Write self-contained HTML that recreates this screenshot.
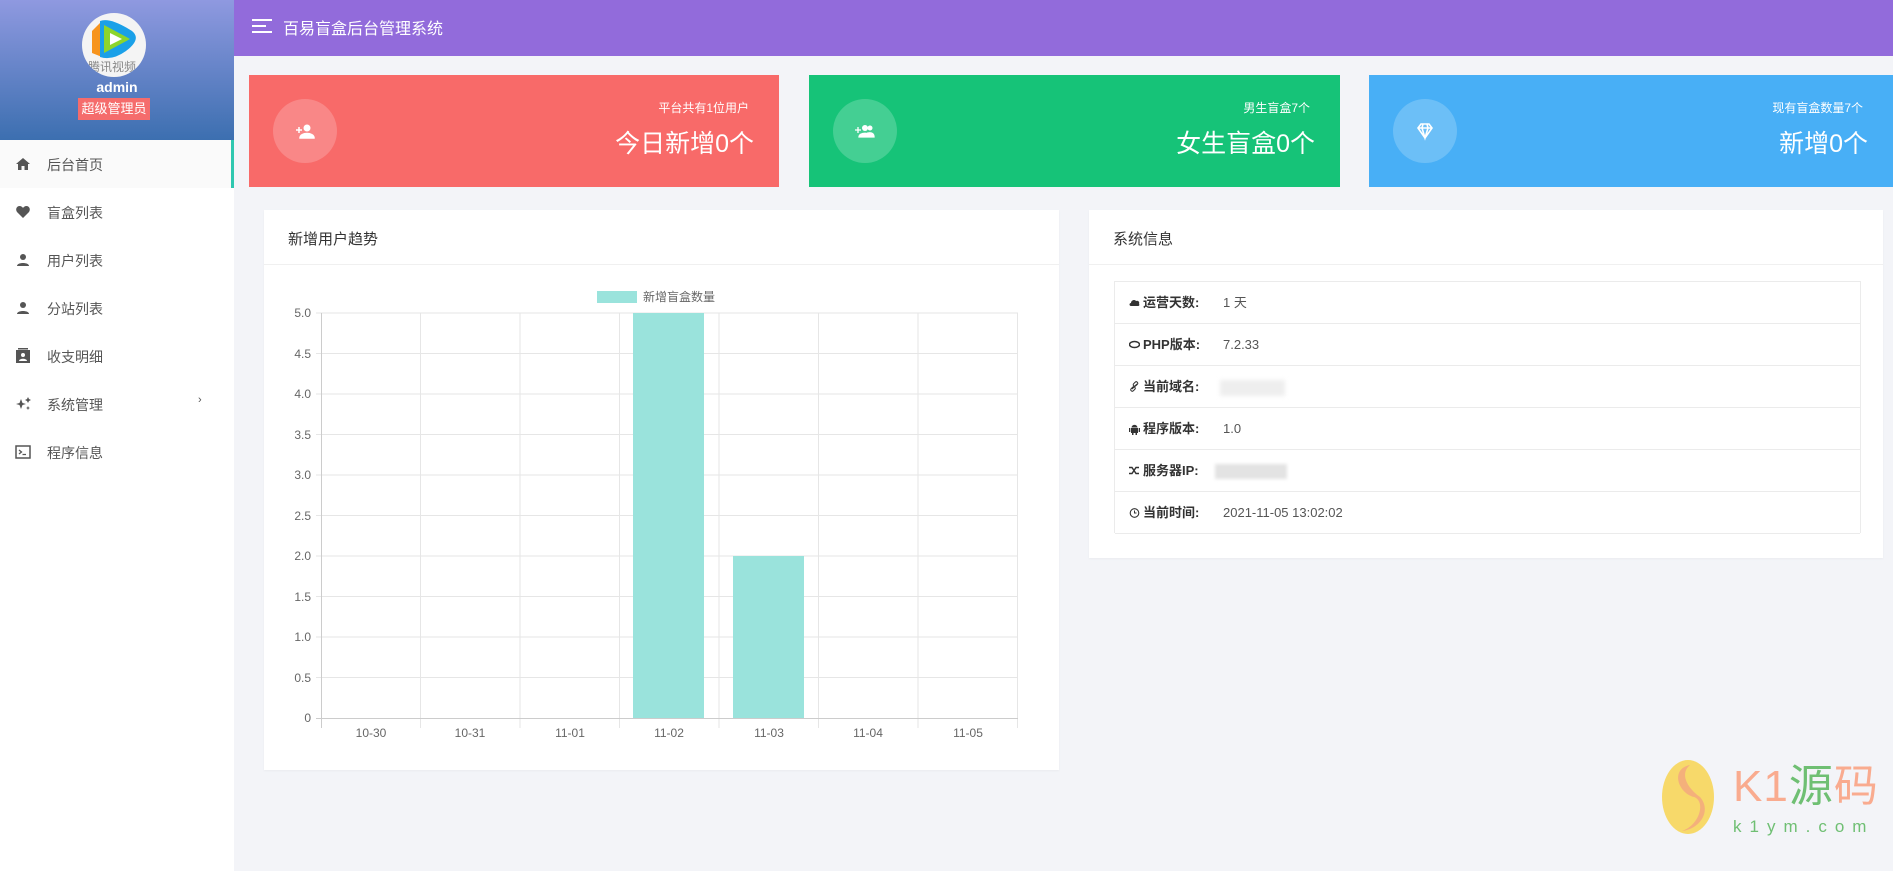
<!DOCTYPE html>
<html><head><meta charset="utf-8"><style>
*{margin:0;padding:0;box-sizing:border-box}
body{width:1893px;height:871px;overflow:hidden;background:#f3f4f8;font-family:"Liberation Sans","Noto Sans CJK SC",sans-serif;position:relative}
.abs{position:absolute}
#side{left:0;top:0;width:234px;height:871px;background:#fff}
#sh{left:0;top:0;width:234px;height:140px;background:linear-gradient(#8f99e0,#3c6fb0)}
.mi{position:absolute;left:0;width:234px;height:48px;font-size:14px;color:#555}
.mi span{position:absolute;left:47px;top:15px}
.mi svg{position:absolute;left:15px;top:16px}
#top{left:234px;top:0;width:1659px;height:56px;background:#926bdb}
.card{position:absolute;top:75px;height:112px;color:#fff}
.circ{position:absolute;left:24px;top:24px;width:64px;height:64px;border-radius:50%;background:rgba(255,255,255,.2)}
.circ svg{position:absolute;left:22px;top:22px}
.small{position:absolute;right:30px;top:24px;font-size:12px}
.big{position:absolute;right:25px;top:49px;font-size:25px}
.panel{position:absolute;top:210px;background:#fff;box-shadow:0 1px 2px rgba(0,0,0,.04)}
.ph{position:absolute;left:24px;top:18px;font-size:15px;color:#333}
.pl{position:absolute;left:0;right:0;top:54px;height:1px;background:#f0f0f0}
.row{position:absolute;left:0;right:0;height:42px;border-bottom:1px solid #ebebeb;font-size:13px;color:#555;line-height:41px}
.row b{position:absolute;left:28px;top:0;color:#333;font-weight:bold}
.row i{font-style:normal;position:absolute;left:108px;top:0}
.row svg{position:absolute;left:14px;top:15px}
</style></head><body>
<div id="side" class="abs">
 <div id="sh" class="abs">
  <div class="abs" style="left:82px;top:13px;width:64px;height:64px;border-radius:50%;background:#f4f4f4;overflow:hidden">
   <svg width="64" height="64"><path d="M10 18 L20 8 L20 44 L10 40Z" fill="#f7941d"/><path d="M18 8 Q28 4 50 18 Q60 26 44 38 Q30 48 18 44Z" fill="#1aa0e8"/><path d="M22 12 L48 26 L22 40Z" fill="#8dd52c"/><path d="M28 20 L40 26 L28 32Z" fill="#fff"/><text x="6" y="58" font-size="12" fill="#888">腾讯视频</text></svg>
  </div>
  <div class="abs" style="left:0;width:234px;top:79px;text-align:center;color:#fff;font-weight:bold;font-size:14px">admin</div>
  <div class="abs" style="left:78px;top:98px;width:72px;height:22px;background:#f56c6c;color:#fff;font-size:13px;text-align:center;line-height:22px">超级管理员</div>
 </div>
 <div class="mi" style="top:140px;background:#fafafa;border-right:3px solid #2ec7b0"><svg width="16" height="16" viewBox="0 0 16 16"><path d="M8 2 L1 8 H3 V14 H6.5 V10 H9.5 V14 H13 V8 H15Z" fill="#555"/></svg><span>后台首页</span></div>
 <div class="mi" style="top:188px"><svg width="16" height="16" viewBox="0 0 16 16"><path d="M8 14 L2 8 C0 5 2 2 4.5 2 C6 2 7.5 3 8 4 C8.5 3 10 2 11.5 2 C14 2 16 5 14 8Z" fill="#555"/></svg><span>盲盒列表</span></div>
 <div class="mi" style="top:236px"><svg width="16" height="16" viewBox="0 0 16 16"><circle cx="8" cy="5" r="3" fill="#555"/><path d="M2 14 C2 10 14 10 14 14Z" fill="#555"/></svg><span>用户列表</span></div>
 <div class="mi" style="top:284px"><svg width="16" height="16" viewBox="0 0 16 16"><circle cx="8" cy="5" r="3" fill="#555"/><path d="M2 14 C2 10 14 10 14 14Z" fill="#555"/></svg><span>分站列表</span></div>
 <div class="mi" style="top:332px"><svg width="16" height="17" viewBox="0 0 16 17"><rect x="1" y="2" width="14" height="13" fill="#555"/><rect x="3" y="0" width="10" height="1.5" fill="#555"/><circle cx="8" cy="7" r="2" fill="#fff"/><path d="M4 13 C4 10 12 10 12 13Z" fill="#fff"/></svg><span>收支明细</span></div>
 <div class="mi" style="top:380px"><svg width="18" height="16" viewBox="0 0 18 16"><path d="M6 3 L7.5 7 L11 8 L7.5 9 L6 13 L4.5 9 L1 8 L4.5 7Z M13 1 L14 3 L16 4 L14 5 L13 7 L12 5 L10 4 L12 3Z M13 10 L13.7 11.5 L15 12 L13.7 12.5 L13 14 L12.3 12.5 L11 12 L12.3 11.5Z" fill="#555"/></svg><span>系统管理</span><span style="left:198px;font-size:11px;top:14px">›</span></div>
 <div class="mi" style="top:428px"><svg width="16" height="16" viewBox="0 0 16 16"><rect x="1" y="2" width="14" height="12" fill="none" stroke="#555" stroke-width="1.5"/><path d="M4 6 L6.5 8 L4 10 M7.5 10.5 H11" stroke="#555" stroke-width="1.3" fill="none"/></svg><span>程序信息</span></div>
</div>
<div id="top" class="abs">
 <svg class="abs" style="left:18px;top:19px" width="20" height="14"><path d="M0 1H20M0 7H14M0 13H20" stroke="#fff" stroke-width="2"/></svg>
 <div class="abs" style="left:49px;top:15px;color:#fff;font-size:16px">百易盲盒后台管理系统</div>
</div>
<div class="card" style="left:249px;width:530px;background:#f86a69"><div class="circ"><svg width="20" height="20" viewBox="0 0 20 20"><circle cx="12" cy="7" r="3.5" fill="#fff"/><path d="M5 17 C5 11 19 11 19 17Z M1 9H7M4 6V12" fill="#fff" stroke="#fff" stroke-width="1.5"/></svg></div><div class="small">平台共有1位用户</div><div class="big">今日新增0个</div></div>
<div class="card" style="left:809px;width:531px;background:#16c378"><div class="circ"><svg width="20" height="20" viewBox="0 0 20 20"><circle cx="10" cy="7" r="3" fill="#fff"/><circle cx="15" cy="7" r="2.5" fill="#fff"/><path d="M4 16 C4 11 16 11 16 16Z M13 12 C17 11 19 13 19 16H16Z M0 9H6M3 6V12" fill="#fff" stroke="#fff" stroke-width="1.3"/></svg></div><div class="small">男生盲盒7个</div><div class="big">女生盲盒0个</div></div>
<div class="card" style="left:1369px;width:524px;background:#48aff6"><div class="circ"><svg width="20" height="20" viewBox="0 0 20 20"><path d="M3 7 L6 3H14L17 7L10 17Z M3 7H17 M8 3L7 7L10 17L13 7L12 3" fill="none" stroke="#fff" stroke-width="1.6"/></svg></div><div class="small">现有盲盒数量7个</div><div class="big">新增0个</div></div>

<div class="panel" style="left:264px;width:795px;height:560px"><div class="ph">新增用户趋势</div><div class="pl"></div></div>
<svg class="abs" style="left:0;top:0" width="1893" height="871" font-family="Liberation Sans, Noto Sans CJK SC, sans-serif">
 <rect x="597" y="291" width="40" height="12" fill="#9ae3dc"/>
 <text x="643" y="301" font-size="12" fill="#666">新增盲盒数量</text>
 <g stroke="#e6e6e6" stroke-width="1">
  <line x1="316" y1="313" x2="1018" y2="313"/><line x1="316" y1="353.5" x2="1018" y2="353.5"/><line x1="316" y1="394" x2="1018" y2="394"/><line x1="316" y1="434.5" x2="1018" y2="434.5"/><line x1="316" y1="475" x2="1018" y2="475"/><line x1="316" y1="515.5" x2="1018" y2="515.5"/><line x1="316" y1="556" x2="1018" y2="556"/><line x1="316" y1="596.5" x2="1018" y2="596.5"/><line x1="316" y1="637" x2="1018" y2="637"/><line x1="316" y1="677.5" x2="1018" y2="677.5"/>
  <line x1="420.5" y1="313" x2="420.5" y2="728"/><line x1="520" y1="313" x2="520" y2="728"/><line x1="619.5" y1="313" x2="619.5" y2="728"/><line x1="719" y1="313" x2="719" y2="728"/><line x1="818.5" y1="313" x2="818.5" y2="728"/><line x1="918" y1="313" x2="918" y2="728"/><line x1="1017.5" y1="313" x2="1017.5" y2="728"/>
 </g>
 <line x1="321.5" y1="313" x2="321.5" y2="728" stroke="#ccc"/><line x1="316" y1="718.5" x2="1018" y2="718.5" stroke="#ccc"/>
 <rect x="633" y="313" width="71" height="405" fill="#9ae3dc"/>
 <rect x="733" y="556" width="71" height="162" fill="#9ae3dc"/>
 <g font-size="12" fill="#666" text-anchor="end">
  <text x="311" y="317">5.0</text><text x="311" y="358">4.5</text><text x="311" y="398">4.0</text><text x="311" y="439">3.5</text><text x="311" y="479">3.0</text><text x="311" y="520">2.5</text><text x="311" y="560">2.0</text><text x="311" y="601">1.5</text><text x="311" y="641">1.0</text><text x="311" y="682">0.5</text><text x="311" y="722">0</text>
 </g>
 <g font-size="12" fill="#666" text-anchor="middle">
  <text x="371" y="737">10-30</text><text x="470" y="737">10-31</text><text x="570" y="737">11-01</text><text x="669" y="737">11-02</text><text x="769" y="737">11-03</text><text x="868" y="737">11-04</text><text x="968" y="737">11-05</text>
 </g>
</svg>

<div class="panel" style="left:1089px;width:794px;height:348px"><div class="ph">系统信息</div><div class="pl"></div>
 <div class="abs" style="left:25px;top:71px;width:747px;height:252px;border:1px solid #ebebeb;border-bottom:none">
  <div class="row" style="top:0"><svg width="11" height="11" viewBox="0 0 11 11"><path d="M2 9 C0 9 0 6 2 6 C2 3 6 2 7 4 C9 3 11 5 10 7 C11 8 10 9 9 9Z" fill="#333"/></svg><b>运营天数:</b><i>1 天</i></div>
  <div class="row" style="top:42px"><svg width="11" height="11" viewBox="0 0 11 11"><ellipse cx="5.5" cy="5.5" rx="5" ry="3" fill="none" stroke="#333" stroke-width="1.5"/></svg><b>PHP版本:</b><i>7.2.33</i></div>
  <div class="row" style="top:84px"><svg width="11" height="11" viewBox="0 0 11 11"><path d="M3 8 L8 3" stroke="#333" stroke-width="1.2"/><rect x="5" y="0.5" width="3" height="5" rx="1.5" transform="rotate(45 6.5 3)" fill="none" stroke="#333"/><rect x="2.5" y="5.5" width="3" height="5" rx="1.5" transform="rotate(45 4 8)" fill="none" stroke="#333"/></svg><b>当前域名:</b><div class="abs" style="left:105px;top:14px;width:65px;height:16px;background:#eee;filter:blur(2px)"></div></div>
  <div class="row" style="top:126px"><svg width="11" height="12" viewBox="0 0 11 12"><path d="M2 5 H9 V10 H2Z M2.5 4.5 C3 1 8 1 8.5 4.5Z M0 5 H1.3 V9 H0Z M9.7 5 H11 V9 H9.7Z M3 10 H4.5 V12 H3Z M6.5 10 H8 V12 H6.5Z" fill="#333"/></svg><b>程序版本:</b><i>1.0</i></div>
  <div class="row" style="top:168px"><svg width="11" height="11" viewBox="0 0 11 11"><path d="M0 2.5 H3 L7 8.5 H10 M0 8.5 H3 L7 2.5 H10" fill="none" stroke="#333" stroke-width="1.4"/></svg><b>服务器IP:</b><div class="abs" style="left:100px;top:14px;width:72px;height:15px;background:#e3e3e3;filter:blur(1.5px)"></div></div>
  <div class="row" style="top:210px"><svg width="11" height="11" viewBox="0 0 11 11"><circle cx="5.5" cy="6" r="4.3" fill="none" stroke="#333" stroke-width="1.1"/><path d="M5.5 3.5 V6 H7.5" fill="none" stroke="#333"/></svg><b>当前时间:</b><i>2021-11-05 13:02:02</i></div>
 </div>
</div>

<svg class="abs" style="left:1660px;top:755px" width="60" height="85"><ellipse cx="28" cy="42" rx="26" ry="37" fill="#f7d96a"/><path d="M30 10 C10 14 18 38 34 42 C46 46 40 70 22 76 C40 74 52 56 40 42 C26 32 20 18 30 10Z" fill="#f3a57f" opacity=".8"/></svg>
<div class="abs" style="left:1733px;top:762px;font-size:44px;line-height:50px;color:#f9ab8f;letter-spacing:1px">K1<span style="color:#6fbf73">源</span>码</div>
<div class="abs" style="left:1733px;top:817px;font-size:17px;color:#6fbf73;letter-spacing:8px">k1ym.com</div>
</body></html>
